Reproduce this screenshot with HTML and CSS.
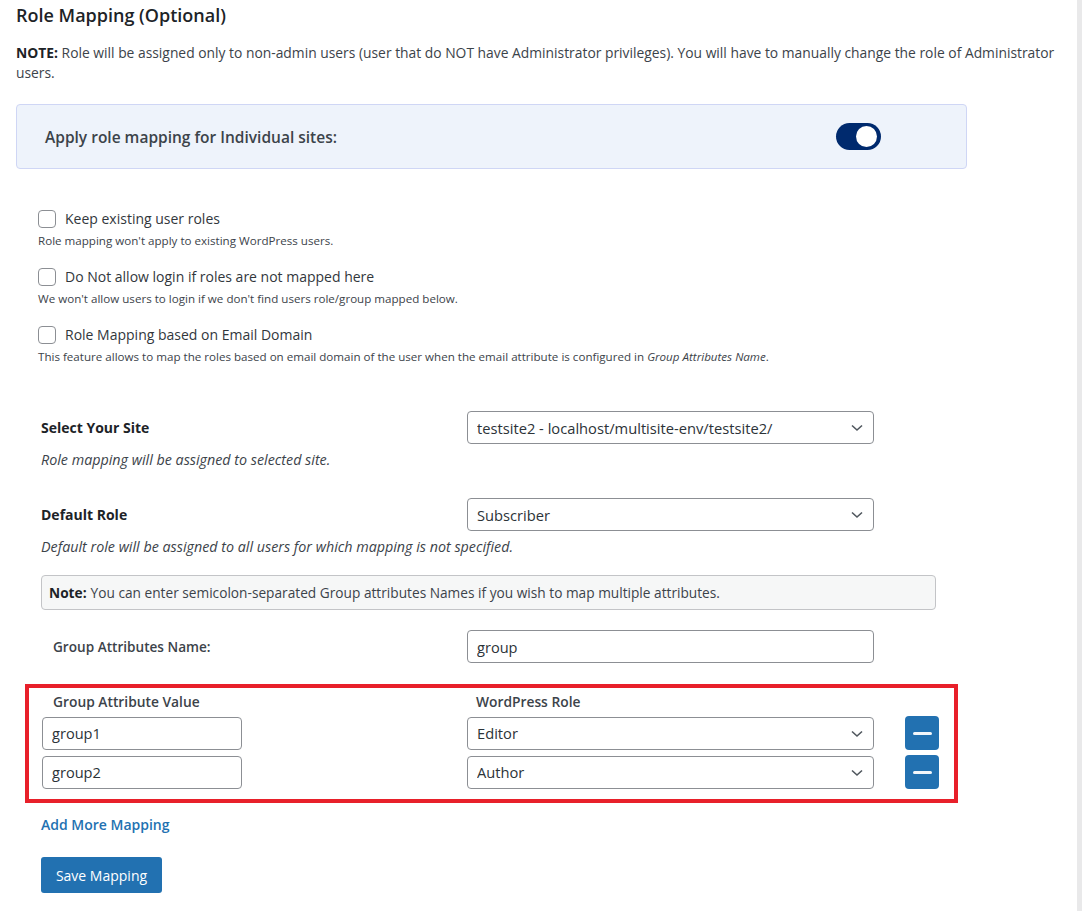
FILE: index.html
```html
<!DOCTYPE html>
<html>
<head>
<meta charset="utf-8">
<link rel="stylesheet" href="styles.css">
</head>
<body>
<div class="page">
  <h2 class="title">Role Mapping (Optional)</h2>
  <p class="note"><b>NOTE:</b> Role will be assigned only to non-admin users (user that do NOT have Administrator privileges). You will have to manually change the role of Administrator users.</p>

  <div class="apply-box">
    <span class="apply-label">Apply role mapping for Individual sites:</span>
    <span class="toggle"><span class="knob"></span></span>
  </div>

  <div class="checks">
    <label class="check-row"><input type="checkbox" class="cb"><span class="check-label">Keep existing user roles</span></label>
    <div class="check-desc">Role mapping won't apply to existing WordPress users.</div>

    <label class="check-row gap"><input type="checkbox" class="cb"><span class="check-label">Do Not allow login if roles are not mapped here</span></label>
    <div class="check-desc">We won't allow users to login if we don't find users role/group mapped below.</div>

    <label class="check-row gap"><input type="checkbox" class="cb"><span class="check-label">Role Mapping based on Email Domain</span></label>
    <div class="check-desc">This feature allows to map the roles based on email domain of the user when the email attribute is configured in <i>Group Attributes Name</i>.</div>
  </div>

  <div class="form">
    <div class="field-row site-row">
      <div class="field-label"><b>Select Your Site</b></div>
      <div class="select-wrap">
        <select class="select"><option>testsite2 - localhost/multisite-env/testsite2/</option></select>
        <svg class="chev" width="12" height="8" viewBox="0 0 12 8"><path d="M1 1.5 L6 6 L11 1.5" fill="none" stroke="#50575e" stroke-width="1.6"/></svg>
      </div>
    </div>
    <div class="field-desc">Role mapping will be assigned to selected site.</div>

    <div class="field-row role-row">
      <div class="field-label"><b>Default Role</b></div>
      <div class="select-wrap">
        <select class="select"><option>Subscriber</option></select>
        <svg class="chev" width="12" height="8" viewBox="0 0 12 8"><path d="M1 1.5 L6 6 L11 1.5" fill="none" stroke="#50575e" stroke-width="1.6"/></svg>
      </div>
    </div>
    <div class="field-desc">Default role will be assigned to all users for which mapping is not specified.</div>

    <div class="info-box"><b>Note:</b> You can enter semicolon-separated Group attributes Names if you wish to map multiple attributes.</div>

    <div class="field-row attr-row">
      <div class="field-label attr-label">Group Attributes Name:</div>
      <input type="text" class="text-input wide" value="group">
    </div>

    <div class="mapping">
      <div class="map-head">
        <div class="map-col1">Group Attribute Value</div>
        <div class="map-col2">WordPress Role</div>
      </div>
      <div class="map-row">
        <input type="text" class="text-input small" value="group1">
        <div class="select-wrap">
          <select class="select"><option>Editor</option></select>
          <svg class="chev" width="12" height="8" viewBox="0 0 12 8"><path d="M1 1.5 L6 6 L11 1.5" fill="none" stroke="#50575e" stroke-width="1.6"/></svg>
        </div>
        <button class="minus"><span class="bar"></span></button>
      </div>
      <div class="map-row">
        <input type="text" class="text-input small" value="group2">
        <div class="select-wrap">
          <select class="select"><option>Author</option></select>
          <svg class="chev" width="12" height="8" viewBox="0 0 12 8"><path d="M1 1.5 L6 6 L11 1.5" fill="none" stroke="#50575e" stroke-width="1.6"/></svg>
        </div>
        <button class="minus"><span class="bar"></span></button>
      </div>
    </div>

    <a class="add-more" href="#">Add More Mapping</a>
    <button class="save">Save Mapping</button>
  </div>
</div>
</body>
</html>
```

FILE: styles.css
```css
html, body {
  margin: 0;
  padding: 0;
}
body {
  background: #e9e9ea;
  font-family: "Open Sans", "Noto Sans", sans-serif;
  color: #3c434a;
  font-size: 13px;
}
.page {
  background: #fff;
  margin-right: 5px;
  min-height: 911px;
  padding-left: 16px;
  box-sizing: border-box;
}
.title {
  margin: 0;
  font-size: 18px;
  font-weight: 600;
  line-height: 30px;
  color: #1d2327;
}
.note {
  margin: 13px 0 0 0;
  line-height: 20px;
  font-size: 13.85px;
  padding-right: 4px;
}
.note b { color: #1d2327; font-weight: 700; }

.apply-box {
  margin-top: 21px;
  width: 951px;
  height: 65px;
  box-sizing: border-box;
  background: #eef3fb;
  border: 1px solid #cfd6f5;
  border-radius: 4px;
  display: flex;
  align-items: center;
  justify-content: space-between;
  padding: 0 85px 0 28px;
}
.apply-label {
  font-size: 15.5px;
  font-weight: 600;
  color: #3c434a;
}
.toggle {
  width: 45px;
  height: 27px;
  border-radius: 14px;
  background: #002a6e;
  display: flex;
  align-items: center;
  justify-content: flex-end;
  padding-right: 4px;
  box-sizing: border-box;
}
.knob {
  width: 21px;
  height: 21px;
  border-radius: 50%;
  background: #fff;
}

.checks {
  margin-top: 39px;
  padding-left: 22px;
}
.check-row {
  display: flex;
  align-items: center;
  height: 20px;
}
.check-row.gap { margin-top: 17px; }
.cb {
  appearance: none;
  -webkit-appearance: none;
  margin: 0 9px 0 0;
  width: 18px;
  height: 18px;
  border: 1px solid #8c8f94;
  border-radius: 4px;
  background: #fff;
  box-sizing: border-box;
  position: relative;
  top: 1px;
}
.check-label {
  font-size: 14px;
  font-weight: 500;
  color: #32373c;
}
.check-desc {
  margin-top: 5px;
  font-size: 11.6px;
  line-height: 16px;
  color: #3c434a;
}

.form {
  padding-left: 25px;
}
.field-row {
  display: flex;
  align-items: center;
}
.site-row { margin-top: 46px; }
.role-row { margin-top: 28px; }
.attr-row { margin-top: 20px; }
.field-label {
  width: 426px;
  flex: none;
  font-size: 14px;
  color: #1d2327;
}
.field-label b { font-weight: 700; }
.attr-label {
  padding-left: 12px;
  box-sizing: border-box;
  font-weight: 600;
  font-size: 13.6px;
  color: #3c434a;
}
.field-desc {
  margin-top: 6px;
  font-style: italic;
  font-size: 14.3px;
  line-height: 20px;
  color: #3c434a;
}
.select-wrap {
  position: relative;
  width: 407px;
  height: 33px;
  flex: none;
}
.select {
  appearance: none;
  -webkit-appearance: none;
  width: 100%;
  height: 100%;
  box-sizing: border-box;
  border: 1px solid #8c8f94;
  border-radius: 4px;
  background: #fff;
  padding: 0 30px 0 9px;
  font-family: "Open Sans", "Noto Sans", sans-serif;
  font-size: 14.7px;
  color: #2c3338;
  margin: 0;
}
.chev {
  position: absolute;
  right: 11px;
  top: 13px;
  pointer-events: none;
}
.info-box {
  margin-top: 18px;
  width: 895px;
  height: 35px;
  box-sizing: border-box;
  border: 1px solid #c3c4c7;
  border-radius: 4px;
  background: #f6f7f7;
  padding: 0 0 0 7px;
  display: flex;
  align-items: center;
  font-size: 13.7px;
  color: #3c434a;
}
.info-box b { margin-right: 4px; color: #1d2327; }
.text-input {
  height: 33px;
  box-sizing: border-box;
  border: 1px solid #8c8f94;
  border-radius: 4px;
  background: #fff;
  padding: 0 9px;
  font-family: "Open Sans", "Noto Sans", sans-serif;
  font-size: 14.6px;
  color: #2c3338;
  margin: 0;
}
.text-input.wide { width: 407px; }
.text-input.small { width: 200px; }

.mapping {
  margin: 21px 0 0 -16px;
  width: 933px;
  box-sizing: border-box;
  border: 4px solid #e8202a;
  padding: 3px 0 10px 13px;
}
.map-head {
  display: flex;
  height: 20px;
  align-items: center;
  font-size: 13.8px;
  font-weight: 600;
  color: #3c434a;
}
.map-col1 { width: 424px; padding-left: 11px; box-sizing: border-box; }
.map-col2 { padding-left: 10px; }
.map-row {
  display: flex;
  align-items: center;
  margin-top: 5px;
}
.map-row .text-input.small { margin-right: 225px; }
.minus {
  margin-left: 31px;
  width: 34px;
  height: 34px;
  border: none;
  border-radius: 4px;
  background: #2271b1;
  display: flex;
  align-items: center;
  justify-content: center;
  padding: 0;
}
.bar {
  width: 19px;
  height: 3px;
  border-radius: 2px;
  background: #f2f6fa;
}
.add-more {
  display: block;
  margin-top: 12px;
  line-height: 20px;
  font-size: 14px;
  font-weight: 600;
  color: #2271b1;
  text-decoration: none;
}
.save {
  display: block;
  margin-top: 22px;
  width: 121px;
  height: 36px;
  border: none;
  border-radius: 3px;
  background: #2271b1;
  color: #fff;
  font-family: "Open Sans", "Noto Sans", sans-serif;
  font-size: 14px;
  padding: 0;
}
```
